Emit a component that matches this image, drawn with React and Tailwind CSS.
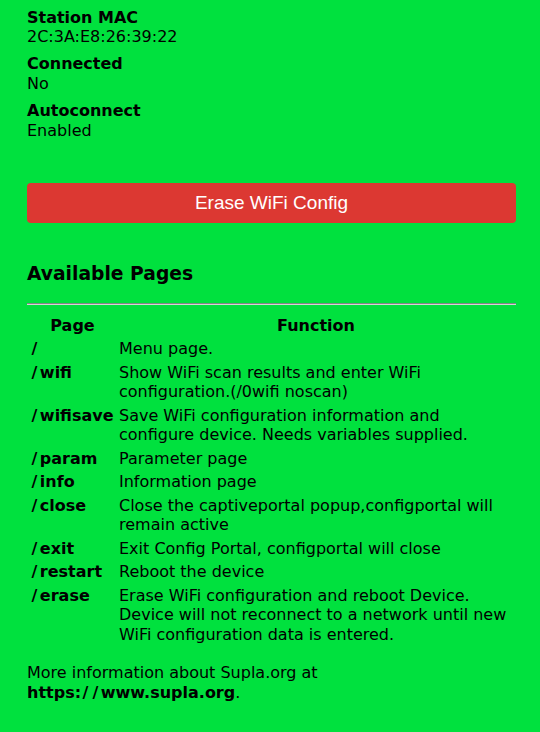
import React from 'react';

const info = [
  { label: 'Station MAC', value: '2C:3A:E8:26:39:22' },
  { label: 'Connected', value: 'No' },
  { label: 'Autoconnect', value: 'Enabled' },
];

const pages = [
  { path: '', text: 'Menu page.' },
  { path: 'wifi', text: 'Show WiFi scan results and enter WiFi configuration.(/0wifi noscan)' },
  { path: 'wifisave', text: 'Save WiFi configuration information and configure device. Needs variables supplied.' },
  { path: 'param', text: 'Parameter page' },
  { path: 'info', text: 'Information page' },
  { path: 'close', text: 'Close the captiveportal popup,configportal will remain active' },
  { path: 'exit', text: 'Exit Config Portal, configportal will close' },
  { path: 'restart', text: 'Reboot the device' },
  { path: 'erase', text: 'Erase WiFi configuration and reboot Device. Device will not reconnect to a network until new WiFi configuration data is entered.' },
];

// bold slash is much wider in the original font, pad it a little
function Slash() {
  return <span className="pl-[1.5px] pr-[2.5px]">/</span>;
}

export default function App() {
  return (
    <div className="min-h-screen bg-[#00e13e] text-black font-['DejaVu_Sans',sans-serif] text-[16px] leading-[19.4px] pl-[27px] pr-[24px] pt-[7.5px] pb-6">
      <div className="flex flex-col gap-2">
        {info.map(item => (
          <div key={item.label}>
            <div className="font-bold">{item.label}</div>
            <div>{item.value}</div>
          </div>
        ))}
      </div>

      <button className="mt-[43px] w-full h-[40px] rounded-[4px] bg-[#dc3832] text-white font-['Liberation_Sans',Arial,sans-serif] text-[19px] leading-none">
        Erase WiFi Config
      </button>

      <h3 className="mt-[40px] text-[18.72px] leading-[22px] font-bold">Available Pages</h3>
      <hr className="mt-[18px] h-0 border-t border-b border-t-[#858585] border-b-[#d4d4d4]" />

      <table className="mt-2 w-full border-separate border-spacing-[2px] leading-[19.5px]">
        <thead>
          <tr>
            <th className="w-[87px] p-px font-bold text-center">Page</th>
            <th className="p-px font-bold text-center">Function</th>
          </tr>
        </thead>
        <tbody>
          {pages.map(page => (
            <tr key={page.path}>
              <td className="p-px align-top font-bold whitespace-nowrap">
                <Slash />{page.path}
              </td>
              <td className="p-px align-top">{page.text}</td>
            </tr>
          ))}
        </tbody>
      </table>

      <p className="mt-4">
        More information about Supla.org at{' '}
        <b>https:<Slash /><Slash />www.supla.org</b>.
      </p>
    </div>
  );
}
